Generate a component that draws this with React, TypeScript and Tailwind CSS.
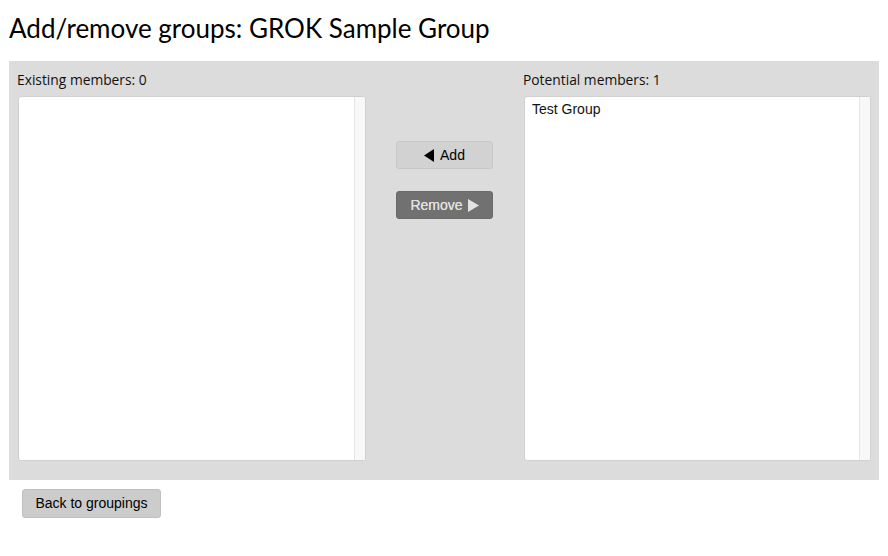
import React from "react";

function ListBox({ items }: { items: string[] }) {
  return (
    <div className="flex h-[365px] overflow-hidden rounded-[3px] border border-[#d0d0d0] bg-white">
      <div className="flex-1 px-[7px] pt-[3px]">
        {items.map((it) => (
          <div key={it} className="text-[14px] leading-[18px] text-[#111]" style={{ fontFamily: '"Liberation Sans", Arial, sans-serif' }}>
            {it}
          </div>
        ))}
      </div>
      <div className="w-[11px] border-l border-[#e6e6e6] bg-[#f8f8f8]" />
    </div>
  );
}

export default function App() {
  const heading = { fontFamily: 'Lato, "Open Sans", sans-serif' };
  const label = { fontFamily: '"Open Sans", Lato, sans-serif' };
  const arial = { fontFamily: '"Liberation Sans", Arial, sans-serif' };
  return (
    <div className="min-h-[556px] w-[888px] bg-white">
      <h1 className="h-[61px] pl-[9px] pt-[12px] text-[26px] leading-[32px] font-normal text-black" style={heading}>
        Add/remove groups: GROK Sample Group
      </h1>
      <div className="ml-[9px] w-[870px] bg-[#dcdcdc] px-2 pb-[19px] pt-[10px]">
        <div className="flex">
          <div className="w-[349px]">
            <div className="mb-[7px] h-[18px] text-[13.8px] leading-[18px] text-[#111]" style={label}>
              Existing members: 0
            </div>
            <div className="pl-[1px]">
              <ListBox items={[]} />
            </div>
          </div>
          <div className="flex w-[157px] flex-col items-center pt-[70px]">
            <button
              className="flex h-[28px] w-[97px] items-center justify-center gap-[6px] rounded-[3px] border border-[#c8c8c8] bg-[#d2d2d2] text-[14px] text-black"
              style={arial}
            >
              <svg width="10" height="13" viewBox="0 0 10 13">
                <path d="M10 0 L0 6.5 L10 13 Z" fill="#000" />
              </svg>
              Add
            </button>
            <button
              className="mt-[22px] flex h-[28px] w-[97px] items-center justify-center gap-[5px] rounded-[3px] border border-[#6a6a6a] bg-[#717171] text-[14px] text-[#e2e2e2] [text-shadow:0_0_0.4px_#e2e2e2]"
              style={arial}
            >
              Remove
              <svg width="11" height="13" viewBox="0 0 11 13">
                <path d="M0 0 L11 6.5 L0 13 Z" fill="#e2e2e2" />
              </svg>
            </button>
          </div>
          <div className="w-[348px]">
            <div className="mb-[7px] h-[18px] text-[13.8px] leading-[18px] text-[#111]" style={label}>
              Potential members: 1
            </div>
            <div className="pl-[1px]">
              <ListBox items={["Test Group"]} />
            </div>
          </div>
        </div>
      </div>
      <div className="pl-[22px] pt-[9px]">
        <button
          className="h-[29px] w-[139px] rounded-[3px] border border-[#c0c0c0] bg-[#cccccc] text-[14px] text-black"
          style={arial}
        >
          Back to groupings
        </button>
      </div>
    </div>
  );
}
